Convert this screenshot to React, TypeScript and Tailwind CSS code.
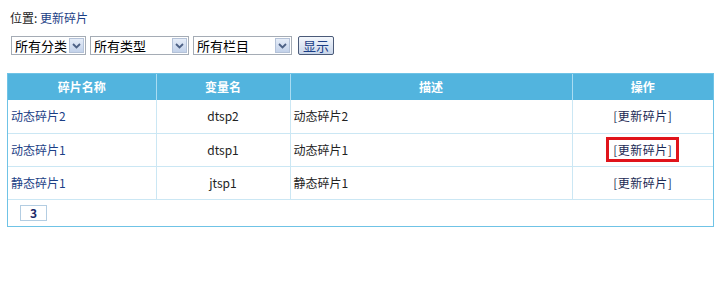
import React from "react";

const rows = [
  { name: "动态碎片2", key: "dtsp2", desc: "动态碎片2", marked: false },
  { name: "动态碎片1", key: "dtsp1", desc: "动态碎片1", marked: true },
  { name: "静态碎片1", key: "jtsp1", desc: "静态碎片1", marked: false },
];

function FakeSelect({ label, width }: { label: string; width: string }) {
  return (
    <div className={`flex items-center h-[19px] border border-[#a5acb5] bg-white ${width}`}>
      <span className="flex-1 pl-[3px] text-[13px] leading-none text-black">{label}</span>
      <span className="mr-px h-[15px] w-[15px] flex items-center justify-center border border-[#b4c2d8] bg-gradient-to-b from-[#e6edf8] to-[#c3d2ea]">
        <svg width="9" height="6" viewBox="0 0 9 6">
          <path d="M1 1 L4.5 4.5 L8 1" fill="none" stroke="#4d6185" strokeWidth="1.8" />
        </svg>
      </span>
    </div>
  );
}

export default function App() {
  return (
    <div className="w-[723px] h-[296px] bg-white font-['Noto_Sans_CJK_SC','Liberation_Sans',sans-serif] text-[12px] text-[#222]">
      {/* location */}
      <div className="pt-[9px] pl-[10px] leading-[18px]">
        位置: <span className="text-[#1b3e86]">更新碎片</span>
      </div>

      {/* filters */}
      <div className="flex items-center gap-[4px] pl-[11px] mt-[9px]">
        <FakeSelect label="所有分类" width="w-[75px]" />
        <FakeSelect label="所有类型" width="w-[99px]" />
        <FakeSelect label="所有栏目" width="w-[99px]" />
        <button className="ml-[2px] h-[19px] px-[4px] border border-[#4a5a78] rounded-[2px] bg-gradient-to-b from-[#f4f7fc] to-[#c9d6ea] text-[13px] leading-none text-[#1b3e86]">
          显示
        </button>
      </div>

      {/* table */}
      <div className="ml-[7px] mt-[18px] w-[707px] border border-[#6fc3e6]">
        <table className="w-full border-collapse table-fixed">
          <colgroup>
            <col className="w-[148px]" />
            <col className="w-[134px]" />
            <col className="w-[282px]" />
            <col />
          </colgroup>
          <thead>
            <tr className="h-[26px] bg-[#52b4de] text-white font-bold">
              <th className="border-r border-[#a9dcf2]">碎片名称</th>
              <th className="border-r border-[#a9dcf2]">变量名</th>
              <th className="border-r border-[#a9dcf2]">描述</th>
              <th>操作</th>
            </tr>
          </thead>
          <tbody>
            {rows.map((r) => (
              <tr key={r.key} className="h-[33px] border-b border-[#cbe7f4]">
                <td className="pl-[3px] text-[#1b3e86] border-r border-[#cbe7f4]">{r.name}</td>
                <td className="text-center text-[#222] border-r border-[#cbe7f4]">{r.key}</td>
                <td className="pl-[3px] text-[#222] border-r border-[#cbe7f4]">{r.desc}</td>
                <td className="text-center">
                  <span
                    className={
                      r.marked
                        ? "inline-block border-[3px] border-[#e0141b] px-[4px] leading-[19px] tracking-[0.5px] text-[#1b2a55]"
                        : "inline-block px-[7px] tracking-[0.5px] text-[#1b2a55]"
                    }
                  >
                    [更新碎片]
                  </span>
                </td>
              </tr>
            ))}
          </tbody>
        </table>
        <div className="h-[26px] flex items-center pl-[12px]">
          <span className="h-[16px] w-[27px] flex items-center justify-center border border-[#b3cde2] text-[#1b2a6a] font-bold text-[12px] leading-none">
            3
          </span>
        </div>
      </div>
    </div>
  );
}
